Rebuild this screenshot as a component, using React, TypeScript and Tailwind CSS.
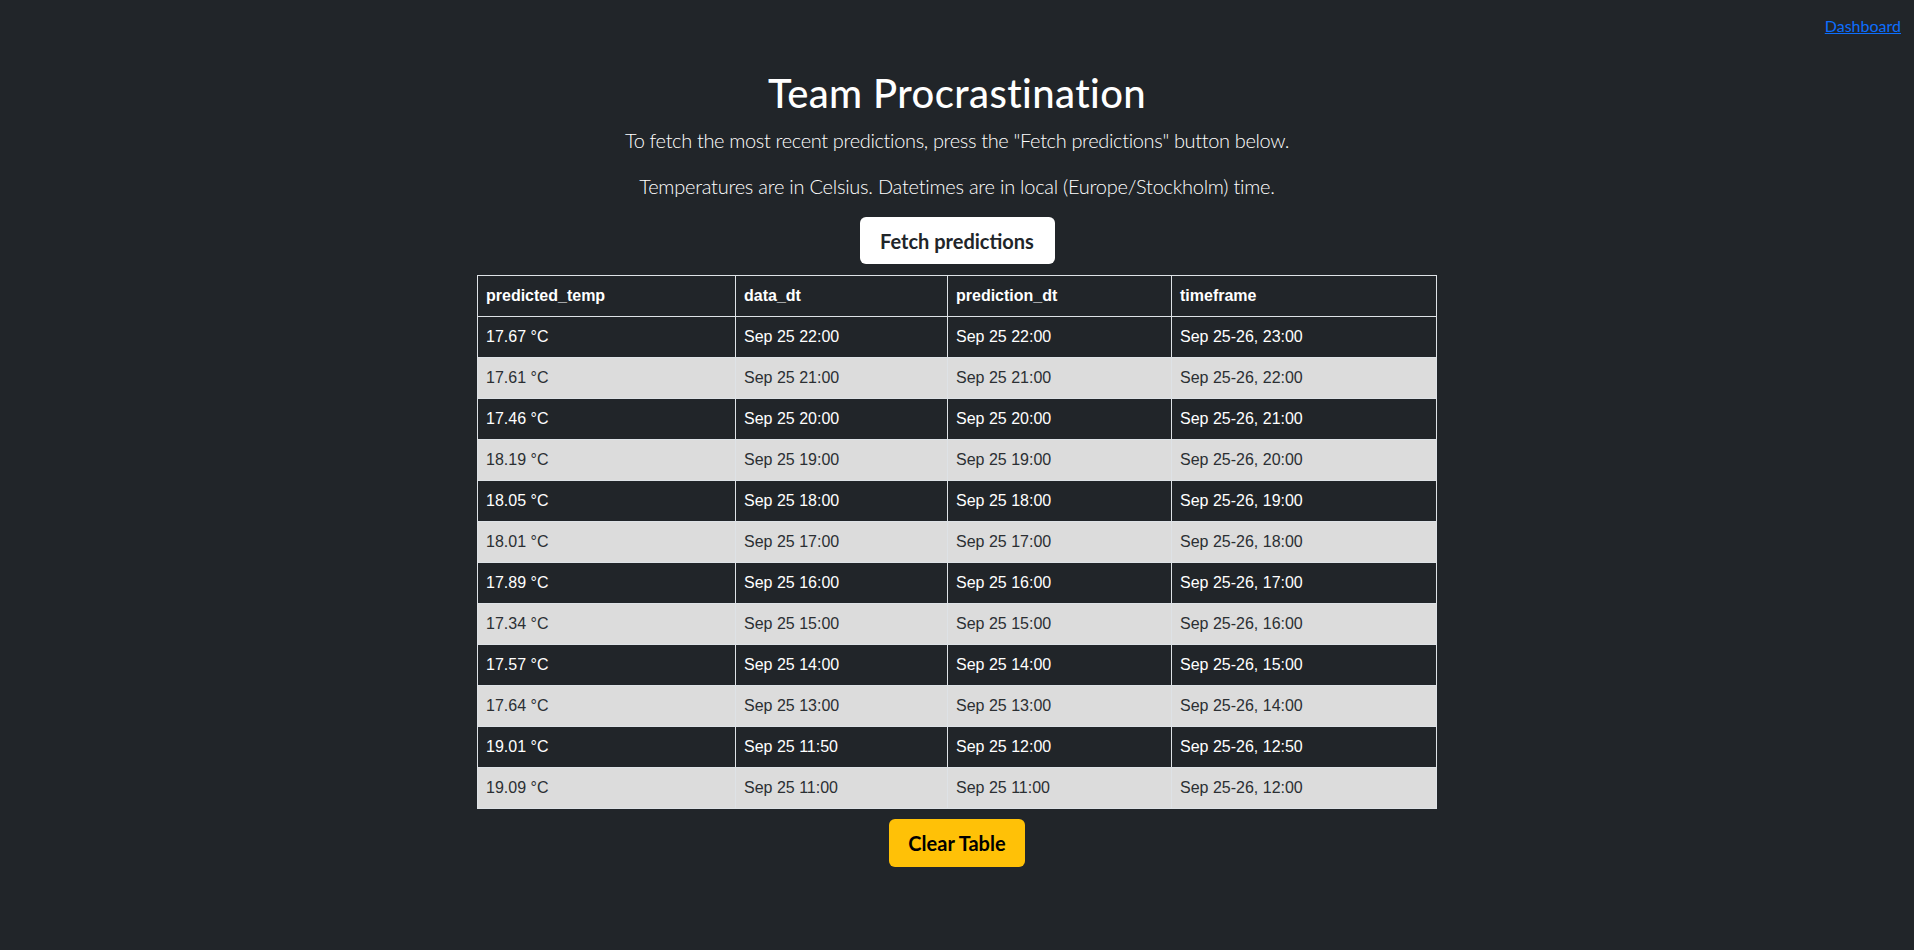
import React from 'react';

type Row = {
    temp: string;
    dataDt: string;
    predDt: string;
    timeframe: string;
};

const rows: Row[] = [
    { temp: '17.67 °C', dataDt: 'Sep 25 22:00', predDt: 'Sep 25 22:00', timeframe: 'Sep 25-26, 23:00' },
    { temp: '17.61 °C', dataDt: 'Sep 25 21:00', predDt: 'Sep 25 21:00', timeframe: 'Sep 25-26, 22:00' },
    { temp: '17.46 °C', dataDt: 'Sep 25 20:00', predDt: 'Sep 25 20:00', timeframe: 'Sep 25-26, 21:00' },
    { temp: '18.19 °C', dataDt: 'Sep 25 19:00', predDt: 'Sep 25 19:00', timeframe: 'Sep 25-26, 20:00' },
    { temp: '18.05 °C', dataDt: 'Sep 25 18:00', predDt: 'Sep 25 18:00', timeframe: 'Sep 25-26, 19:00' },
    { temp: '18.01 °C', dataDt: 'Sep 25 17:00', predDt: 'Sep 25 17:00', timeframe: 'Sep 25-26, 18:00' },
    { temp: '17.89 °C', dataDt: 'Sep 25 16:00', predDt: 'Sep 25 16:00', timeframe: 'Sep 25-26, 17:00' },
    { temp: '17.34 °C', dataDt: 'Sep 25 15:00', predDt: 'Sep 25 15:00', timeframe: 'Sep 25-26, 16:00' },
    { temp: '17.57 °C', dataDt: 'Sep 25 14:00', predDt: 'Sep 25 14:00', timeframe: 'Sep 25-26, 15:00' },
    { temp: '17.64 °C', dataDt: 'Sep 25 13:00', predDt: 'Sep 25 13:00', timeframe: 'Sep 25-26, 14:00' },
    { temp: '19.01 °C', dataDt: 'Sep 25 11:50', predDt: 'Sep 25 12:00', timeframe: 'Sep 25-26, 12:50' },
    { temp: '19.09 °C', dataDt: 'Sep 25 11:00', predDt: 'Sep 25 11:00', timeframe: 'Sep 25-26, 12:00' },
];

const cell = 'border border-[#dee2e6] px-2 py-2 h-[41px] text-left align-middle leading-6';

export default function App() {
    return (
        <div className="min-h-screen bg-[#212529] font-['Lato','Noto_Sans',sans-serif] text-white">
            <div className="flex justify-end pt-[14px] pr-[13px]">
                <a href="#" className="text-base leading-6 text-[#0d6efd] underline">
                    Dashboard
                </a>
            </div>

            <div className="flex flex-col items-center mt-[31px]">
                <h1 className="text-[40px] leading-[48px] font-medium tracking-[0.4px] text-white mb-2">
                    Team Procrastination
                </h1>
                <p className="text-xl leading-[30px] font-light tracking-[-0.35px] mb-4">
                    To fetch the most recent predictions, press the "Fetch predictions" button below.
                </p>
                <p className="text-xl leading-[30px] font-light tracking-[-0.25px] mb-4">
                    Temperatures are in Celsius. Datetimes are in local (Europe/Stockholm) time.
                </p>
                <button className="h-[47px] w-[195px] bg-white text-[#212529] text-xl font-bold rounded-[6px]">
                    Fetch predictions
                </button>

                <table className="mt-[11px] border-collapse font-['Liberation_Sans',Arial,sans-serif] text-base">
                    <thead>
                        <tr className="text-white">
                            <th className={`${cell} w-[258px] font-bold`}>predicted_temp</th>
                            <th className={`${cell} w-[212px] font-bold`}>data_dt</th>
                            <th className={`${cell} w-[224px] font-bold`}>prediction_dt</th>
                            <th className={`${cell} w-[265px] font-bold`}>timeframe</th>
                        </tr>
                    </thead>
                    <tbody>
                        {rows.map((r, i) => (
                            <tr
                                key={i}
                                className={i % 2 === 0 ? 'bg-[#212529] text-white' : 'bg-[#dcdcdc] text-[#2b2f33]'}
                            >
                                <td className={cell}>{r.temp}</td>
                                <td className={cell}>{r.dataDt}</td>
                                <td className={cell}>{r.predDt}</td>
                                <td className={cell}>{r.timeframe}</td>
                            </tr>
                        ))}
                    </tbody>
                </table>

                <button className="mt-[10px] h-[48px] w-[136px] bg-[#ffc107] text-black text-xl font-bold rounded-[6px]">
                    Clear Table
                </button>
            </div>
        </div>
    );
}
